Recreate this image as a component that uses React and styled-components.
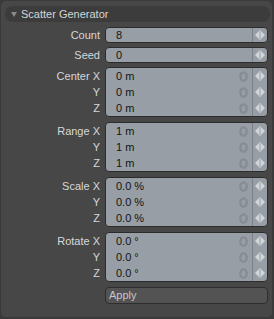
import styled, { createGlobalStyle } from "styled-components";

const GlobalStyle = createGlobalStyle`
  body {
    margin: 0;
    background: #3a3a3a;
    font-family: "Liberation Sans", Arial, sans-serif;
    font-size: 11px;
  }
`;

const Panel = styled.div`
  box-sizing: border-box;
  margin: 1px 2px 0 1px;
  height: 316px;
  background: #474747;
  border-radius: 5px;
  padding: 5px 2px 0 4px;
`;

const Header = styled.div`
  height: 16px;
  background: #3c3c3c;
  border-radius: 7px;
  display: flex;
  align-items: center;
  gap: 4px;
  padding-left: 6px;
  color: #d3d6d9;
  font-size: 11px;
`;

const Form = styled.div`
  display: flex;
  flex-direction: column;
  padding-right: 2px;
  margin-top: 5px;
`;

const Group = styled.div`
  display: flex;
  gap: 5px;
  margin-top: ${(p) => p.$gap}px;
`;

const Labels = styled.div`
  width: 95px;
  flex-shrink: 0;
  padding-top: 1px;
  display: flex;
  flex-direction: column;
  align-items: flex-end;
  color: #d5d8db;
`;

const Label = styled.div`
  height: ${(p) => p.$h}px;
  line-height: ${(p) => p.$h}px;
  white-space: nowrap;
`;

const FieldBox = styled.div`
  flex: 1;
  background: #979ea5;
  border: 1px solid #2c2c2c;
  border-radius: 4px;
  overflow: hidden;
  display: flex;
  flex-direction: column;
`;

const FieldRow = styled.div`
  height: ${(p) => p.$h}px;
  display: flex;
  align-items: center;
`;

const Value = styled.div`
  flex: 1;
  padding-left: 10px;
  color: #141414;
`;

const Reset = styled.svg`
  width: 9px;
  height: 11px;
  margin-right: 4px;
`;

const Spin = styled.div`
  width: 14px;
  height: 100%;
  border-left: 1px solid #7b8187;
  display: flex;
  align-items: center;
  justify-content: center;
`;

const ApplyButton = styled.div`
  flex: 1;
  box-sizing: border-box;
  height: 17px;
  line-height: 15px;
  background: #535353;
  border: 1px solid #2e2e2e;
  border-radius: 4px;
  padding-left: 3px;
  color: #c3c7cb;
`;

const Arrows = () => (
  <svg width="10" height="10" viewBox="0 0 10 10">
    <polygon points="0,5 4,1 4,9" fill="#d3d6d9" />
    <rect x="4.5" y="0" width="1" height="10" fill="#d3d6d9" />
    <polygon points="6,1 10,5 6,9" fill="#d3d6d9" />
  </svg>
);

const ResetIcon = () => (
  <Reset viewBox="0 0 9 11">
    <ellipse
      cx="4.5"
      cy="5.5"
      rx="3.2"
      ry="4.2"
      fill="none"
      stroke="#868c92"
      strokeWidth="2.2"
    />
  </Reset>
);

const groups = [
  { labels: ["Count"], values: ["8"], gap: 0 },
  { labels: ["Seed"], values: ["0"], gap: 4 },
  { labels: ["Center X", "Y", "Z"], values: ["0 m", "0 m", "0 m"], gap: 4 },
  { labels: ["Range X", "Y", "Z"], values: ["1 m", "1 m", "1 m"], gap: 5 },
  { labels: ["Scale X", "Y", "Z"], values: ["0.0 %", "0.0 %", "0.0 %"], gap: 5 },
  { labels: ["Rotate X", "Y", "Z"], values: ["0.0 °", "0.0 °", "0.0 °"], gap: 5 },
];

export default function App() {
  return (
    <>
      <GlobalStyle />
      <Panel>
        <Header>
          <svg width="6" height="5" viewBox="0 0 6 5">
            <polygon points="0,0 6,0 3,5" fill="#8a8a8a" />
          </svg>
          Scatter Generator
        </Header>
        <Form>
          {groups.map((g) => {
            const multi = g.values.length > 1;
            const h = multi ? 16 : 14;
            return (
              <Group key={g.labels[0]} $gap={g.gap}>
                <Labels>
                  {g.labels.map((l, i) => (
                    <Label key={i} $h={h}>
                      {l}
                    </Label>
                  ))}
                </Labels>
                <FieldBox>
                  {g.values.map((v, i) => (
                    <FieldRow key={i} $h={h}>
                      <Value>{v}</Value>
                      {multi && <ResetIcon />}
                      <Spin>
                        <Arrows />
                      </Spin>
                    </FieldRow>
                  ))}
                </FieldBox>
              </Group>
            );
          })}
          <Group $gap={5}>
            <Labels />
            <ApplyButton>Apply</ApplyButton>
          </Group>
        </Form>
      </Panel>
    </>
  );
}
